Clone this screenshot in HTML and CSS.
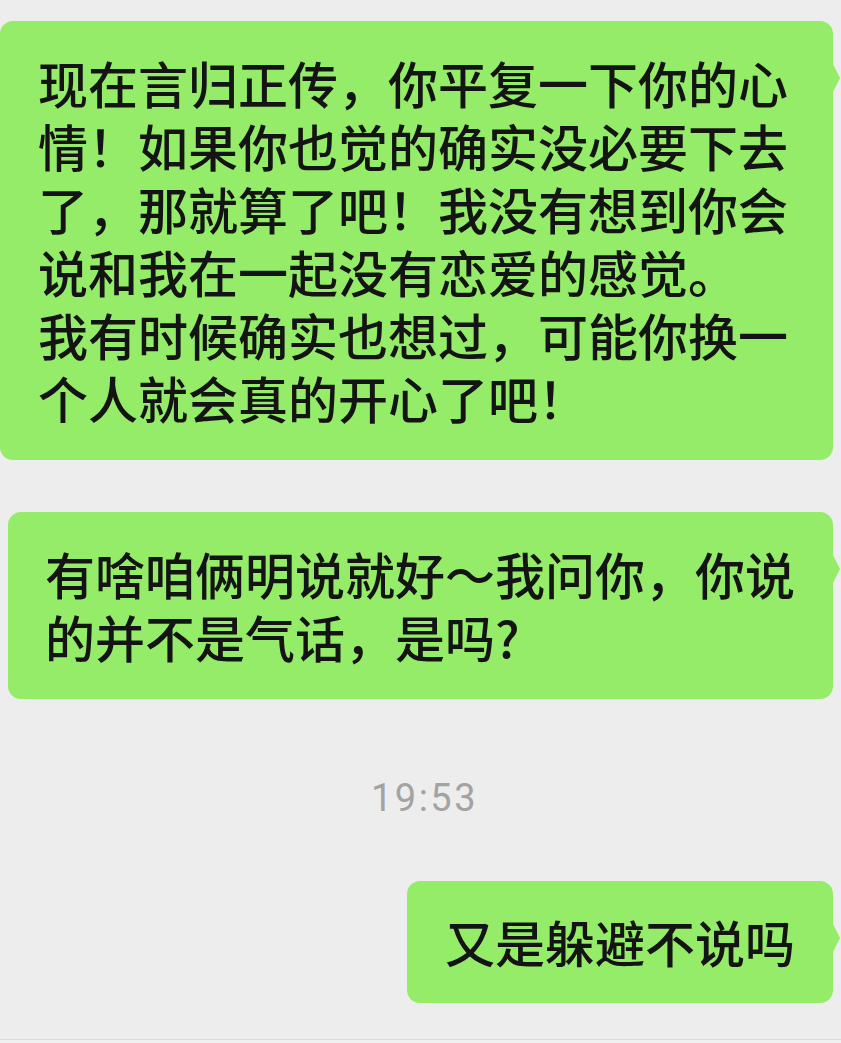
FILE: index.html
```html
<!DOCTYPE html>
<html lang="zh-CN">
  <head>
    <meta charset="UTF-8" />
    <meta name="viewport" content="width=device-width, initial-scale=1.0" />
    <title>聊天记录</title>
    <link rel="stylesheet" href="styles.css">
  </head>
  <body>
    <div class="chat">
      <div class="row">
        <div class="bubble first">现在言归正传，你平复一下你的心情！如果你也觉的确实没必要下去了，那就算了吧！我没有想到你会说和我在一起没有恋爱的感觉。<br />我有时候确实也想过，可能你换一个人就会真的开心了吧！</div>
      </div>
      <div class="row">
        <div class="bubble second">有啥咱俩明说就好～我问你，你说的并不是气话，是吗?</div>
      </div>
      <div class="time">19:53</div>
      <div class="row">
        <div class="bubble third">又是躲避不说吗</div>
      </div>
    </div>
    <div class="bottom-bar"></div>
  </body>
</html>
```

FILE: styles.css
```css
* {
  margin: 0px;
  padding: 0px;
  box-sizing: border-box;
}
body {
  background-color: #ededed;
  font-family: "Noto Sans CJK SC", "Noto Sans", sans-serif;
  color: #141414;
  height: 1043px;
  overflow: hidden;
  display: flex;
  flex-direction: column;
}

.chat {
  flex: 1;
  padding-top: 21px;
  display: flex;
  flex-direction: column;
}
.row {
  display: flex;
  justify-content: flex-end;
  padding-right: 8px;
}
.row + .row {
  margin-top: 52px;
}

.bubble {
  position: relative;
  max-width: 833px;
  background-color: #95ec69;
  border-radius: 13px;
  padding: 30px 38px 31px 38px;
  font-size: 50px;
  font-weight: 500;
  line-height: 63px;
}
.bubble::after {
  content: "";
  position: absolute;
  top: 41px;
  right: -7px;
  border-left: 8px solid #95ec69;
  border-top: 16px solid transparent;
  border-bottom: 16px solid transparent;
}
.second {
  max-width: 825px;
  padding-left: 37px;
}
.third {
  padding: 29px 38px 30px 38px;
}

.time {
  margin-top: 78px;
  margin-bottom: 62px;
  padding-left: 8px;
  text-align: center;
  font-family: Roboto, "Liberation Sans", sans-serif;
  font-size: 38px;
  line-height: 42px;
  letter-spacing: 2.5px;
  color: #a3a3a3;
}

.bottom-bar {
  height: 4px;
  border-top: 1px solid #dcdcdc;
  background-color: #f0f0f0;
}
```
